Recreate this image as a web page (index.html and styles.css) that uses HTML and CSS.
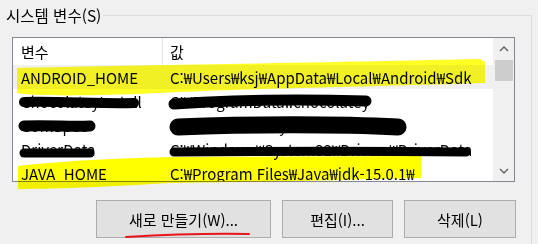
FILE: index.html
```html
<!DOCTYPE html>
<html lang="ko">
<head>
  <meta charset="utf-8">
  <title>시스템 변수</title>
  <link rel="stylesheet" href="styles.css">
</head>
<body>
  <div class="group">
    <div class="group-title">시스템 변수(S)</div>

    <!-- 변수 목록 -->
    <div class="list">
      <div class="table">
        <div class="row head">
          <div class="cell name">변수</div>
          <div class="cell value">값</div>
        </div>
        <div class="row hover">
          <div class="cell name">ANDROID_HOME</div>
          <div class="cell value">C:₩Users₩ksj₩AppData₩Local₩Android₩Sdk</div>
        </div>
        <div class="row">
          <div class="cell name">ChocolateyInstall</div>
          <div class="cell value">C:₩ProgramData₩chocolatey</div>
        </div>
        <div class="row">
          <div class="cell name">ComSpec</div>
          <div class="cell value">C:₩WINDOWS₩system32₩cmd.exe</div>
        </div>
        <div class="row">
          <div class="cell name">DriverData</div>
          <div class="cell value">C:₩Windows₩System32₩Drivers₩DriverData</div>
        </div>
        <div class="row">
          <div class="cell name">JAVA_HOME</div>
          <div class="cell value">C:₩Program Files₩Java₩jdk-15.0.1₩</div>
        </div>
      </div>
      <div class="scrollbar">
        <div class="sb-btn">
          <svg width="10" height="6" viewBox="0 0 10 6"><polyline points="1,5 5,1 9,5" fill="none" stroke="#606060" stroke-width="1.4"/></svg>
        </div>
        <div class="sb-thumb"></div>
        <div class="sb-track"></div>
        <div class="sb-btn">
          <svg width="10" height="6" viewBox="0 0 10 6"><polyline points="1,1 5,5 9,1" fill="none" stroke="#606060" stroke-width="1.4"/></svg>
        </div>
      </div>
    </div>

    <!-- 버튼 -->
    <div class="buttons">
      <button class="btn btn-new">새로 만들기(W)...</button>
      <button class="btn btn-edit">편집(I)...</button>
      <button class="btn btn-del">삭제(L)</button>
    </div>
  </div>

  <!-- 형광펜 / 가림 표시 -->
  <svg class="marks" width="538" height="244" viewBox="0 0 538 244">
    <path d="M17,68 C100,66 300,63 480,59 L485,62 L485,83 C400,86 220,89 140,94 C80,96 30,96 17,93 Z" fill="#ffff00" fill-opacity="0.85" style="mix-blend-mode:multiply"/>
    <path d="M18,166 C60,161 120,158 175,157 L421,156 L421,178 L300,181 L170,183 C120,186 60,189 18,189 Z" fill="#ffff00" style="mix-blend-mode:multiply"/>
    <g fill="none" stroke="#000" stroke-linecap="round">
      <path d="M24,102 C60,101 100,104 134,103" stroke-width="10"/>
      <path d="M174,104 C230,100 300,99 366,101" stroke-width="11"/>
      <path d="M24,126 C50,125 70,127 90,126" stroke-width="11"/>
      <path d="M178,127 C250,124 340,124 398,127" stroke-width="17"/>
      <path d="M24,153 L90,153" stroke-width="9"/>
      <path d="M174,152 C280,151 380,151 466,152" stroke-width="9"/>
    </g>
    <path d="M126,237 C160,235 200,233 249,234" fill="none" stroke="#e8151b" stroke-width="2" stroke-linecap="round"/>
  </svg>
</body>
</html>
```

FILE: styles.css
```css
/* Windows 환경 변수 창 */
body {
  margin: 0;
  width: 538px;
  height: 244px;
  overflow: hidden;
  position: relative;
  background: #f0f0f0;
  color: #000;
  font-family: "Noto Sans CJK KR", "Malgun Gothic", sans-serif;
  font-size: 15px;
}
.group {
  margin: 15px 6px 0 0;
  height: 229px;
  border-top: 1px solid #dcdcdc;
  border-right: 1px solid #dcdcdc;
}
.group-title {
  width: fit-content;
  margin-top: -11px;
  height: 20px;
  line-height: 20px;
  font-size: 15.5px;
  padding: 0 2px 0 6px;
  background: #f0f0f0;
}
.list {
  display: flex;
  box-sizing: border-box;
  width: 503px;
  height: 145px;
  margin: 12px 0 0 12px;
  border: 1px solid #828790;
  background: #fff;
  overflow: hidden;
}
.table {
  flex: 1;
}
.row {
  display: flex;
  height: 24px;
  line-height: 26px;
  white-space: nowrap;
}
.row.head {
  height: 27px;
  line-height: 27px;
}
.row.hover {
  background: #f0f0f0;
}
.cell.name {
  width: 150px;
  padding-left: 8px;
  box-sizing: border-box;
}
.cell.value {
  padding-left: 7px;
}
.head .cell.name {
  border-right: 1px solid #e5e5e5;
}
.scrollbar {
  width: 21px;
  display: flex;
  flex-direction: column;
  background: #f0f0f0;
}
.sb-btn {
  height: 21px;
  display: flex;
  align-items: center;
  justify-content: center;
}
.sb-thumb {
  height: 21px;
  margin: 1px 1px 0 2px;
  background: #cdcdcd;
}
.sb-track {
  flex: 1;
}
.buttons {
  display: flex;
  justify-content: flex-end;
  gap: 11px;
  margin: 18px 15px 0 0;
}
.btn {
  height: 38px;
  border: 1px solid #adadad;
  background: #e1e1e1;
  font-family: inherit;
  font-size: 15px;
  color: #000;
  padding: 0;
}
.btn-new {
  width: 175px;
}
.btn-edit {
  width: 111px;
}
.btn-del {
  width: 112px;
}
.marks {
  position: absolute;
  top: 0;
  left: 0;
  pointer-events: none;
}
```
